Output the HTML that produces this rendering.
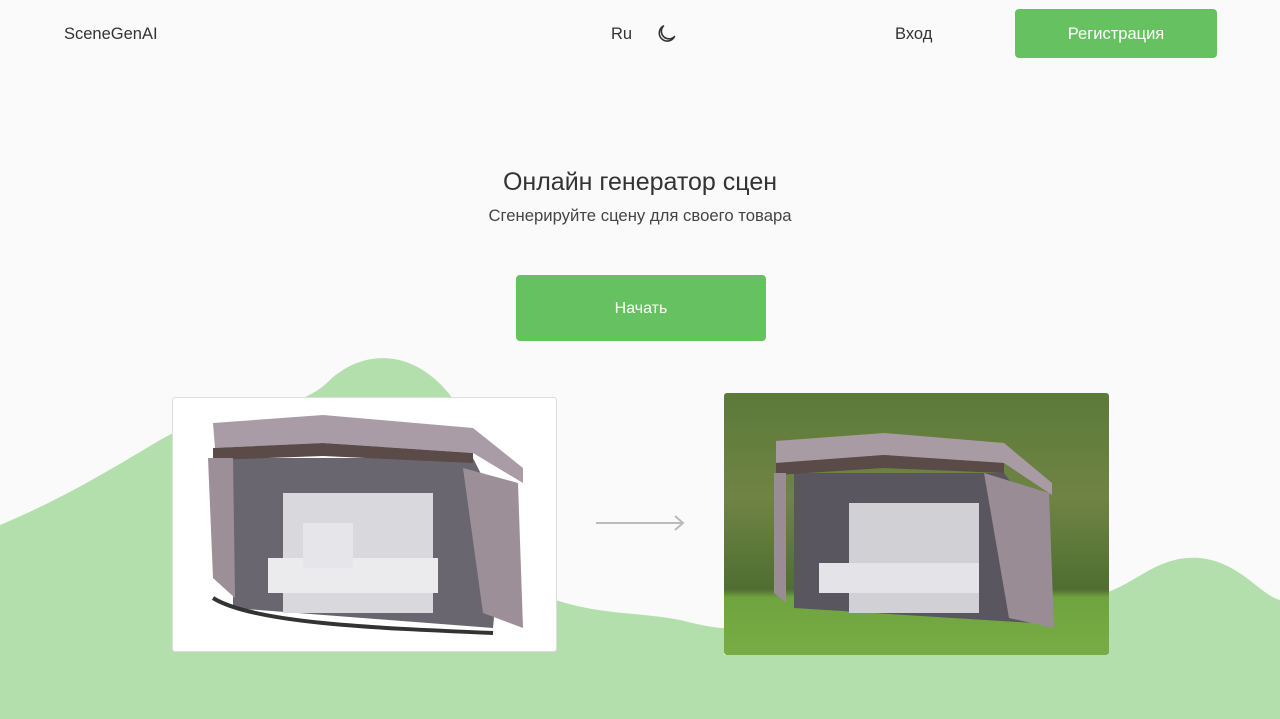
<!DOCTYPE html>
<html><head><meta charset="utf-8"><style>
*{margin:0;padding:0;box-sizing:border-box}
body{width:1280px;height:719px;overflow:hidden;background:#fafafa;font-family:"Liberation Sans",sans-serif;color:#333;position:relative}
.abs{position:absolute}
.btn{background:#66c261;color:#fff;border-radius:4px;display:flex;align-items:center;justify-content:center;font-size:16px}
</style></head><body>
<svg class="abs" style="left:0;top:0" width="1280" height="719">
<path d="M0 525 C60 500 110 470 160 440 C230 400 290 420 330 380 C360 352 410 345 450 395 L470 430 L556 430 L556 600 C600 615 640 612 680 620 C700 625 715 628 724 628 L724 655 L1108 655 L1108 592 C1140 580 1160 555 1200 558 C1240 562 1260 595 1280 600 L1280 719 L0 719 Z" fill="#b2dfab"/>
</svg>
<div class="abs" style="left:64px;top:25px;font-size:16.5px">SceneGenAI</div>
<div class="abs" style="left:611px;top:25px;font-size:16.5px">Ru</div>
<svg class="abs" style="left:655px;top:23px" width="22" height="22" viewBox="0 0 22 22"><path d="M8.5 3 A8 8 0 1 0 19.5 13.5 A7 7 0 0 1 8.5 3 Z" fill="none" stroke="#333" stroke-width="1.6" stroke-linejoin="round"/></svg>
<div class="abs" style="left:895px;top:25px;font-size:16.5px">Вход</div>
<div class="abs btn" style="left:1015px;top:9px;width:202px;height:49px;font-size:16.5px;padding-top:2px">Регистрация</div>
<div class="abs" style="left:0;width:1280px;top:168px;text-align:center;font-size:25px">Онлайн генератор сцен</div>
<div class="abs" style="left:0;width:1280px;top:206px;text-align:center;font-size:16.7px;color:#444">Сгенерируйте сцену для своего товара</div>
<div class="abs btn" style="left:516px;top:275px;width:250px;height:66px;padding-top:2px">Начать</div>
<div class="abs" style="left:172px;top:397px;width:385px;height:255px;background:#fff;border:1px solid #ddd;border-radius:3px;overflow:hidden">
<svg width="385" height="255">
<path d="M60 60 L300 60 L330 120 L320 230 L60 210 Z" fill="#6a6670"/>
<rect x="110" y="95" width="150" height="120" fill="#d9d9dd"/>
<rect x="95" y="160" width="170" height="35" fill="#ebebee"/>
<rect x="130" y="125" width="50" height="45" fill="#e6e6ea"/>
<path d="M40 25 L150 17 L300 30 L350 70 L350 85 L300 55 L150 45 L42 50 Z" fill="#a99ca6"/>
<path d="M40 50 L150 45 L300 55 L300 65 L150 58 L40 62 Z" fill="#5a4a48"/>
<path d="M35 60 L60 60 L62 200 L40 180 Z" fill="#9d8f98"/>
<path d="M290 70 L345 85 L350 230 L310 215 Z" fill="#9d8f98"/>
<path d="M40 200 C80 225 200 230 320 235" stroke="#333" stroke-width="4" fill="none"/>
</svg></div>
<svg class="abs" style="left:595px;top:513px" width="92" height="20"><path d="M1 10 H88 M80 3 L88 10 L80 17" stroke="#bbb" stroke-width="2" fill="none"/></svg>
<div class="abs" style="left:724px;top:393px;width:385px;height:262px;border-radius:3px;overflow:hidden;background:linear-gradient(#5c7a3a 0%,#6f8444 40%,#4f6e30 75%,#6fa33e 78%,#78ad45 100%)">
<svg width="385" height="262">
<path d="M70 80 L280 80 L310 120 L310 230 L70 215 Z" fill="#5a5660"/>
<rect x="125" y="110" width="130" height="110" fill="#d0d0d5"/>
<rect x="95" y="170" width="160" height="30" fill="#e4e4e8"/>
<path d="M52 48 L160 40 L280 50 L328 90 L328 102 L280 70 L160 62 L52 70 Z" fill="#a89ba4"/>
<path d="M52 70 L160 62 L280 70 L280 80 L160 75 L52 82 Z" fill="#5a4a48"/>
<path d="M260 80 L325 100 L330 235 L285 225 Z" fill="#9a8c95"/>
<path d="M50 80 L62 80 L62 210 L50 200 Z" fill="#9a8c95"/>
</svg></div>
</body></html>
